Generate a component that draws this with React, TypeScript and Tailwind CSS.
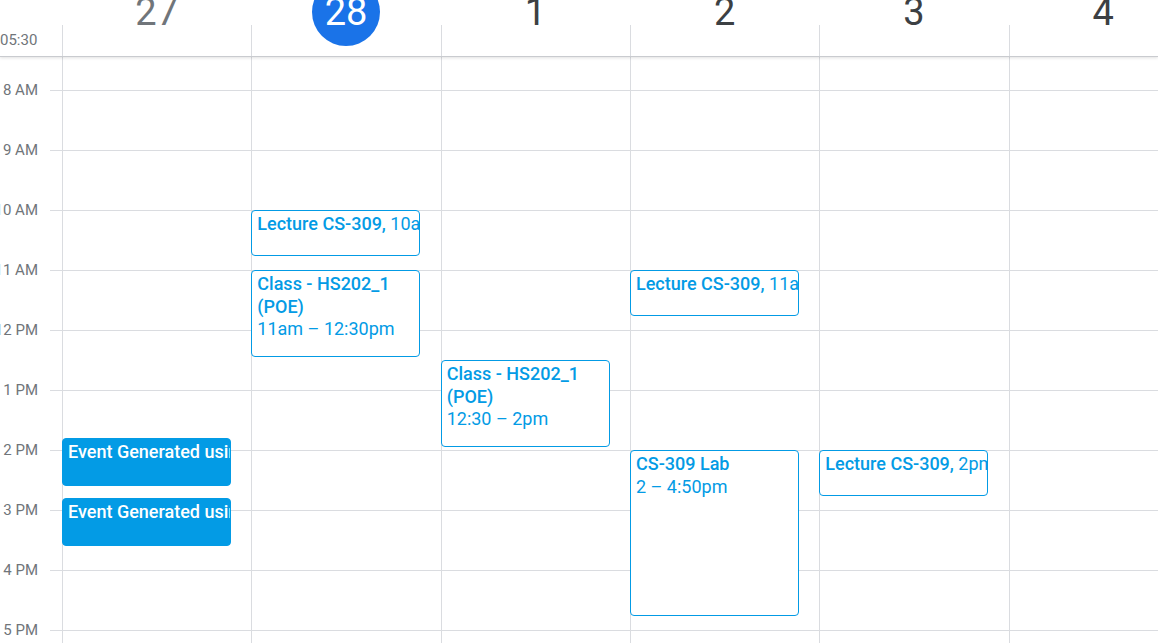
import React from "react";

const days = [
  { num: "27", past: true },
  { num: "28", today: true },
  { num: "1" },
  { num: "2" },
  { num: "3" },
  { num: "4" },
];

const hours = [7, 8, 9, 10, 11, 12, 13, 14, 15, 16, 17];

const hourLabel = (h: number) => {
  const suffix = h < 12 ? "AM" : "PM";
  const v = h > 12 ? h - 12 : h;
  return `${v} ${suffix}`;
};

type Ev = {
  day: number;
  top: number;
  height: number;
  title: string;
  time: string;
  inline?: boolean;
  filled?: boolean;
};

// top is minutes after 7 AM (1px per minute)
const events: Ev[] = [
  { day: 1, top: 180, height: 46, title: "Lecture CS-309,", time: "10am", inline: true },
  { day: 1, top: 240, height: 87, title: "Class - HS202_1 (POE)", time: "11am – 12:30pm" },
  { day: 2, top: 330, height: 87, title: "Class - HS202_1 (POE)", time: "12:30 – 2pm" },
  { day: 3, top: 240, height: 46, title: "Lecture CS-309,", time: "11am", inline: true },
  { day: 3, top: 420, height: 166, title: "CS-309 Lab", time: "2 – 4:50pm" },
  { day: 4, top: 420, height: 46, title: "Lecture CS-309,", time: "2pm", inline: true },
  { day: 0, top: 408, height: 48, title: "Event Generated using Calendar", time: "", filled: true, inline: true },
  { day: 0, top: 468, height: 48, title: "Event Generated using Calendar", time: "", filled: true, inline: true },
];

function EventCard({ ev }: { ev: Ev }) {
  const base = ev.filled
    ? "bg-[#039be5] text-white border-[#039be5]"
    : "bg-white text-[#039be5] border-[#039be5]";
  return (
    <div
      className={`absolute left-[-1px] w-[169px] border rounded-[4px] overflow-hidden pl-[5px] pt-[2px] text-[18px] leading-[22.5px] ${base}`}
      style={{ top: ev.top, height: ev.height }}
    >
      {ev.inline ? (
        <div className="whitespace-nowrap">
          <span className="font-medium">{ev.title}</span>
          {ev.time && <span> {ev.time}</span>}
        </div>
      ) : (
        <>
          <div className="font-medium pr-[4px]">{ev.title}</div>
          <div className="whitespace-nowrap">{ev.time}</div>
        </>
      )}
    </div>
  );
}

export default function App() {
  return (
    <div className="w-[1158px] h-[643px] overflow-hidden bg-white font-['Roboto',sans-serif] flex flex-col">
      {/* Header */}
      <div className="flex h-[57px] shrink-0 border-b border-[#c9cbcf] shadow-[0_1px_3px_rgba(0,0,0,0.12)] relative z-10 bg-white">
        <div className="w-[62px] shrink-0 flex items-end pb-[6px] text-[15px] leading-[20px] text-[#70757a]">
          05:30
        </div>
        {days.map((d) => (
          <div key={d.num} className="w-[189.33px] shrink-0 flex flex-col">
            <div className="h-[25px] flex justify-center">
              <div
                className={`h-[68px] w-[68px] -mt-[22px] shrink-0 rounded-full flex items-center justify-center text-[38px] leading-[38px] ${
                  d.today
                    ? "bg-[#1a73e8] text-white"
                    : d.past
                    ? "text-[#70757a]"
                    : "text-[#3c4043]"
                }`}
              >
                {d.num}
              </div>
            </div>
            <div className="flex-1 border-l border-[#dadce0]" />
          </div>
        ))}
      </div>

      {/* Body */}
      <div className="flex-1 overflow-hidden">
        <div className="flex -mt-[27px]">
          <div className="w-[62px] shrink-0">
            {hours.map((h) => (
              <div key={h} className="h-[60px] relative">
                <div className="absolute top-0 left-[50px] right-0 border-t border-[#dadce0]" />
                <div className="absolute -top-[10px] right-[24px] leading-[20px] text-[15px] text-[#70757a] whitespace-nowrap">
                  {hourLabel(h)}
                </div>
              </div>
            ))}
          </div>
          {days.map((d, i) => (
            <div key={d.num} className="w-[189.33px] shrink-0 border-l border-[#dadce0] relative">
              {hours.map((h) => (
                <div key={h} className="h-[60px] border-t border-[#dadce0]" />
              ))}
              {events
                .filter((e) => e.day === i)
                .map((e, k) => (
                  <EventCard key={k} ev={e} />
                ))}
            </div>
          ))}
        </div>
      </div>
    </div>
  );
}
